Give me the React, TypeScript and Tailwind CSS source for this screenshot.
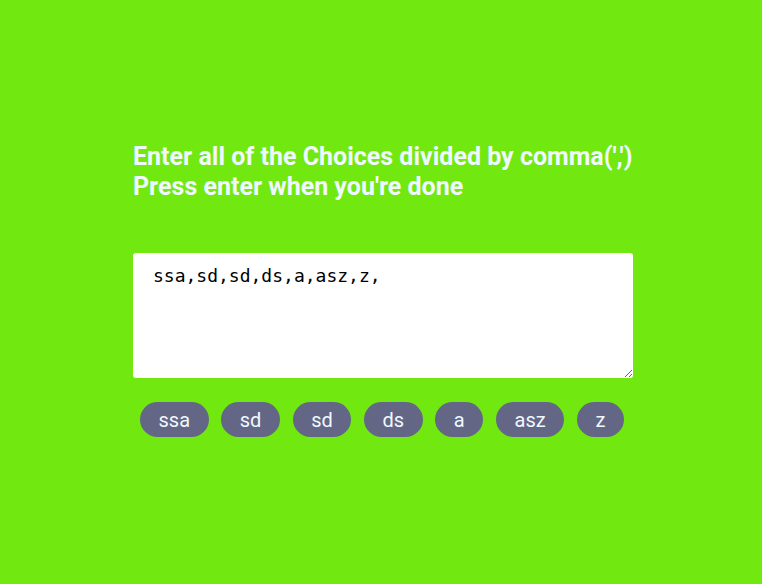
import React from "react";

export default function App() {
  const chips = ["ssa", "sd", "sd", "ds", "a", "asz", "z"];
  return (
    <div className="w-[762px] h-[584px] bg-[#72e811] overflow-hidden" style={{ fontFamily: "Roboto, sans-serif" }}>
      <div className="w-[500px] ml-[133px] pt-[142px]">
        <h1 className="text-[25px] leading-[30px] font-bold text-[#f0f8ff] whitespace-nowrap">
          Enter all of the Choices divided by comma(',')
          <br />
          Press enter when you're done
        </h1>
        <textarea
          className="mt-[51px] block w-[500px] h-[125px] bg-white rounded-[3px] px-[20px] py-[12px] text-[18px] leading-[22px] text-black outline-none"
          style={{ fontFamily: "'DejaVu Sans Mono', monospace" }}
          defaultValue="ssa,sd,sd,ds,a,asz,z,"
        />
        <div className="flex mt-[24px] ml-[7px] gap-[12.75px]">
          {chips.map((c, i) => (
            <span
              key={i}
              className="h-[35px] px-[18.5px] rounded-full bg-[#636785] text-[#f0f8ff] text-[20px] flex items-center"
            >
              {c}
            </span>
          ))}
        </div>
      </div>
    </div>
  );
}
